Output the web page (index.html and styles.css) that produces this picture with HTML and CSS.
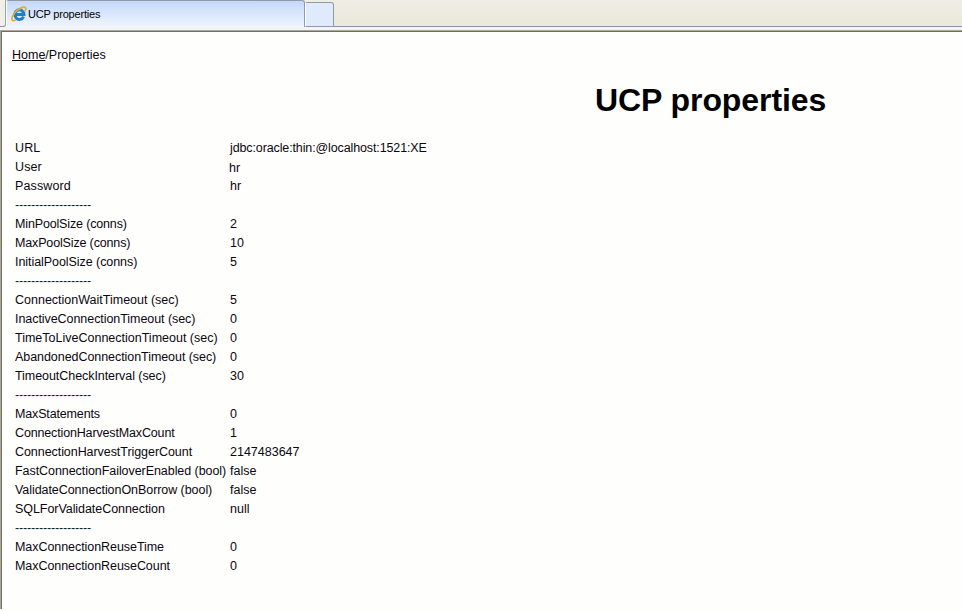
FILE: index.html
```html
<!DOCTYPE html>
<html lang="en">
<head>
<meta charset="utf-8">
<title>UCP properties</title>
<link rel="stylesheet" href="styles.css">
</head>
<body>
<header class="tabs">
  <div class="edge"></div>
  <div class="tab">
    <svg class="icon" viewBox="0 0 16 16" aria-hidden="true">
      <path d="M12.6 10.6A4.6 4.8 0 1 1 13 8.6H5" fill="none" stroke="#1d7fd0" stroke-width="3"/>
      <path d="M4 6Q6 3 9.5 3.5" fill="none" stroke="#6bc5f4" stroke-width="1.3"/>
      <path d="M14 5.1C15.6 2.2 14.7.6 12.1 1.1C8.5 1.8 3.2 6.3 1.5 10.4C.2 13.6 1 15.7 4.6 14" fill="none" stroke="#e9ab27" stroke-width="1.7"/>
    </svg>
    <span class="tab-title">UCP properties</span>
  </div>
  <div class="new-tab"></div>
  <div class="rest"></div>
</header>
<main class="page">
  <p class="crumbs"><a class="home">Home</a>/Properties</p>
  <h1 class="title">UCP properties</h1>
  <dl class="props">
    <dt class="wide">URL</dt><dd class="url">jdbc:oracle:thin:@localhost:1521:XE</dd>
    <dt class="wide">User</dt><dd class="nudged">hr</dd>
    <dt class="wide">Password</dt><dd>hr</dd>
    <dt class="rule">-------------------</dt>
    <dt class="tight">MinPoolSize (conns)</dt><dd>2</dd>
    <dt class="tight">MaxPoolSize (conns)</dt><dd>10</dd>
    <dt>InitialPoolSize (conns)</dt><dd>5</dd>
    <dt class="rule">-------------------</dt>
    <dt class="normal">ConnectionWaitTimeout (sec)</dt><dd>5</dd>
    <dt>InactiveConnectionTimeout (sec)</dt><dd>0</dd>
    <dt class="normal">TimeToLiveConnectionTimeout (sec)</dt><dd>0</dd>
    <dt>AbandonedConnectionTimeout (sec)</dt><dd>0</dd>
    <dt>TimeoutCheckInterval (sec)</dt><dd>30</dd>
    <dt class="rule">-------------------</dt>
    <dt class="tight">MaxStatements</dt><dd>0</dd>
    <dt class="tight">ConnectionHarvestMaxCount</dt><dd>1</dd>
    <dt>ConnectionHarvestTriggerCount</dt><dd>2147483647</dd>
    <dt>FastConnectionFailoverEnabled (bool)</dt><dd>false</dd>
    <dt>ValidateConnectionOnBorrow (bool)</dt><dd>false</dd>
    <dt>SQLForValidateConnection</dt><dd>null</dd>
    <dt class="rule">-------------------</dt>
    <dt>MaxConnectionReuseTime</dt><dd>0</dd>
    <dt>MaxConnectionReuseCount</dt><dd>0</dd>
  </dl>
</main>
</body>
</html>
```
FILE: styles.css
```css
* { box-sizing: border-box; }
body {
  margin: 0;
  height: 609px;
  overflow: hidden;
  display: flex;
  flex-direction: column;
  background: #fefefc;
  color: #0c0610;
  font: 12.5px/15px "Liberation Sans", Arial, sans-serif;
}
.tabs {
  flex: none;
  height: 30px;
  display: flex;
  background: linear-gradient(#efeee4, #ebe8da 26px, #f1f5fb 27px, #f1f5fb);
}
.edge {
  width: 6px;
  height: 27px;
  border-right: 1px solid #9b9fa6;
  border-bottom: 1px solid #8c91a5;
  border-bottom-right-radius: 3px;
  background: #f0efe8;
}
.tab {
  width: 299px;
  height: 27px;
  display: flex;
  align-items: flex-start;
  padding: 5px 0 0 4px;
  border: 1px solid #9299a5;
  border-left-color: #fff;
  border-bottom: 0;
  border-radius: 3px 3px 0 0;
  background: linear-gradient(#c3d9fb, #e0ebfc 65%, #f1f5fb);
}
.icon { width: 16px; height: 16px; flex: none; }
.tab-title {
  margin: 1px 0 0 1px;
  font: 11px/15px "Liberation Sans", Tahoma, sans-serif;
  letter-spacing: -0.2px;
  color: #000;
}
.new-tab {
  width: 29px;
  height: 25px;
  margin-top: 2px;
  border: 1px solid #9299a5;
  border-left-color: #fff;
  border-radius: 0 3px 0 0;
  background: #dfeafd;
}
.rest { flex: 1; height: 27px; border-bottom: 1px solid #8c91a5; }
.page {
  flex: 1;
  padding: 17px 0 0 11px;
  border-top: 1px solid #aca899;
  border-left: 1px solid #aca899;
  box-shadow: inset 1px 1px #716f64;
}
.crumbs { margin: 0; }
.home { text-decoration: underline; }
.title {
  margin: 18px 0 0 583px;
  font: bold 32px/38px "Liberation Sans", Arial, sans-serif;
  letter-spacing: -0.08px;
  color: #000;
}
.props {
  margin: 20px 0 0 3px;
  display: grid;
  grid-template-columns: 215px 1fr;
  grid-auto-rows: 19px;
  line-height: 19px;
  white-space: nowrap;
}
.props dt, .props dd { margin: 0; }
.props dt { letter-spacing: -0.06px; }
.props .wide { letter-spacing: 0.12px; }
.props .normal { letter-spacing: 0; }
.props .tight { letter-spacing: -0.15px; }
.props .url { letter-spacing: -0.12px; }
.props .rule { grid-column: 1 / -1; letter-spacing: -0.16px; color: #002530; }
.props .nudged { position: relative; left: -1px; top: 1px; }
```
